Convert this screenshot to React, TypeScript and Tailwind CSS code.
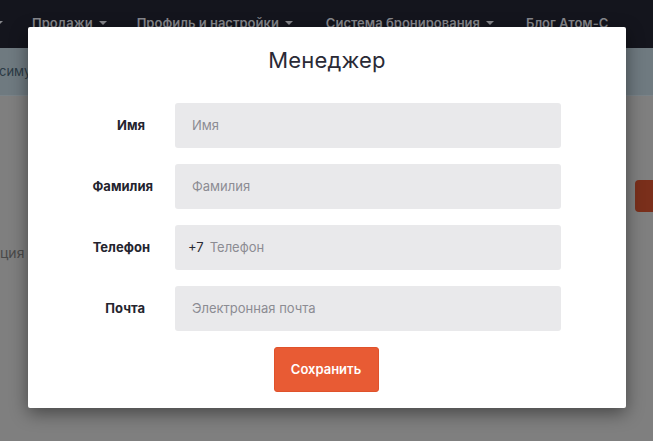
import React from "react";

const font = { fontFamily: "Inter, 'Open Sans', 'Liberation Sans', sans-serif" };

function Caret() {
  return (
    <span className="inline-block w-0 h-0 border-l-[4px] border-r-[4px] border-t-[4px] border-l-transparent border-r-transparent border-t-[#86878c] ml-[6px] translate-y-[-1px]" />
  );
}

function NavItem({ label, caret = true }: { label: string; caret?: boolean }) {
  return (
    <span className="flex items-center text-[13px] font-semibold text-[#86878c] whitespace-nowrap">
      {label}
      {caret && <Caret />}
    </span>
  );
}

function Field({
  label,
  placeholder,
  prefix,
  labelPad,
}: {
  label: string;
  placeholder: string;
  prefix?: string;
  labelPad: string;
}) {
  return (
    <div className="flex items-center h-[45px]">
      <div className={`w-[127px] text-right text-[13px] font-bold text-[#24242e] ${labelPad}`}>{label}</div>
      <div className="ml-[20px] w-[386px] h-[45px] rounded-[3px] bg-[#e9e9eb] flex items-center text-[13px]">
        {prefix ? (
          <>
            <span className="pl-[13px] text-[#2a2a33]">{prefix}</span>
            <span className="pl-[6px] text-[#8c8c93]">{placeholder}</span>
          </>
        ) : (
          <span className="pl-[17px] text-[#8c8c93]">{placeholder}</span>
        )}
      </div>
    </div>
  );
}

export default function App() {
  return (
    <div className="relative w-[653px] h-[441px] overflow-hidden bg-[#7f7f7f]" style={font}>
      {/* top navigation, dimmed by the dialog backdrop */}
      <div className="h-[48px] bg-[#14151d] flex items-center">
        <span className="inline-block w-0 h-0 border-l-[4px] border-r-[4px] border-t-[4px] border-l-transparent border-r-transparent border-t-[#86878c] ml-[-5px] translate-y-[-1px]" />
        <div className="ml-[29px]">
          <NavItem label="Продажи" />
        </div>
        <div className="ml-[30px]">
          <NavItem label="Профиль и настройки" />
        </div>
        <div className="ml-[33px]">
          <NavItem label="Система бронирования" />
        </div>
        <div className="ml-[32px]">
          <NavItem label="Блог Атом-С" caret={false} />
        </div>
      </div>

      {/* notice band */}
      <div className="h-[48px] bg-[#6f7a80] border-b border-[#7a8388] flex items-center">
        <span className="ml-[-1px] text-[13px] text-[#2c3b45]">симу</span>
      </div>

      {/* page content behind the dialog */}
      <div className="relative h-[297px]">
        <div className="absolute left-[635px] top-[84px] w-[40px] h-[32px] rounded-[4px] bg-[#7a2f1b]" />
        <div className="absolute left-[0px] top-[146px] text-[14px] text-[#4a4a4a]">ция</div>
      </div>

      {/* dialog */}
      <div className="absolute left-[28px] top-[27px] w-[598px] h-[381px] bg-white rounded-[2px] shadow-[0_5px_18px_rgba(0,0,0,0.45)] flex flex-col items-stretch">
        <div className="pt-[18px] text-center text-[22px] font-normal text-[#2a2a36] leading-[30px] tracking-[0.2px]">
          Менеджер
        </div>
        <div className="mt-[28px] flex flex-col gap-[16px]">
          <Field label="Имя" placeholder="Имя" labelPad="pr-[10px]" />
          <Field label="Фамилия" placeholder="Фамилия" labelPad="pr-[2px]" />
          <Field label="Телефон" placeholder="Телефон" prefix="+7" labelPad="pr-[5px]" />
          <Field label="Почта" placeholder="Электронная почта" labelPad="pr-[10px]" />
        </div>
        <div className="mt-[16px] flex justify-center">
          <button className="w-[105px] h-[45px] rounded-[3px] bg-[#e85b34] border border-[#e0522b] text-white text-[13px] font-semibold -translate-x-[1px]">
            Сохранить
          </button>
        </div>
      </div>
    </div>
  );
}
